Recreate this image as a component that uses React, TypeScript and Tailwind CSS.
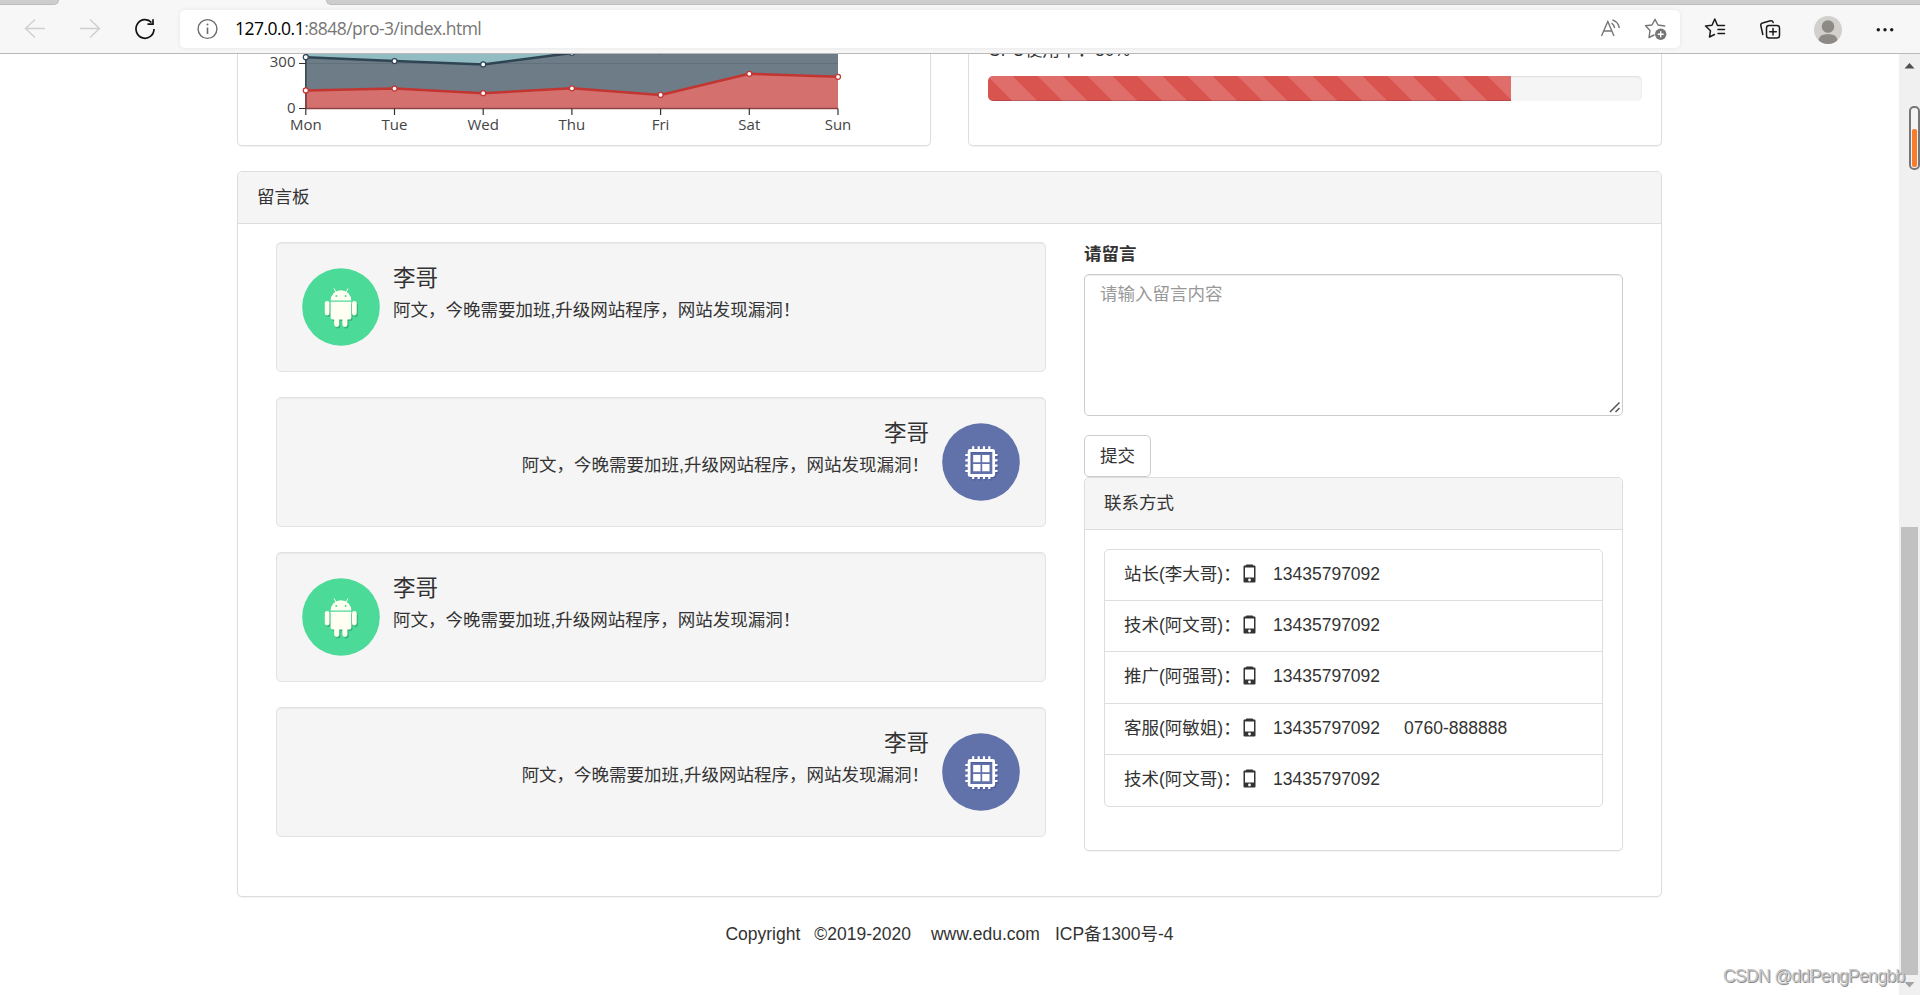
import React from "react";

const ui = "font-['Open_Sans','Noto_Sans_CJK_SC',sans-serif]";

function Toolbar() {
  return (
    <header className="flex h-[54px] shrink-0 flex-col border-b border-[#b9b9b9] bg-[#f7f7f7]">
      <div className="flex h-[5px] shrink-0 justify-between">
        <div className="w-[59px] rounded-br-[6px] border-b border-r border-[#bdbdbd] bg-[#cdcdcd]" />
        <div className="w-[1594px] rounded-bl-[6px] border-b border-l border-[#bdbdbd] bg-[#cdcdcd]" />
      </div>
      <div className="flex h-[48px] items-center pb-0.5 pt-0.5">
        <svg width="180" height="38" fill="none" strokeWidth="1.4">
          <path d="M45 18.500H25.500M35 9.500L25.500 18.500L35 27.500" stroke="#cfcfcf" />
          <path d="M80 18.500H99.500M90 9.500L99.500 18.500L90 27.500" stroke="#cfcfcf" />
          <path d="M151.500 12.500A9 9.300 0 1 0 154 19" stroke="#111" strokeWidth="1.7" />
          <path d="M153 9.200V14.200H147.500" stroke="#111" strokeWidth="1.7" />
        </svg>
        <div className="flex h-[38px] w-[1500px] items-center rounded-[5px] bg-white shadow-[0_0_4px_rgba(0,0,0,0.08)]">
          <svg width="55" height="38" fill="none" stroke="#6c6c6c">
            <circle cx="27.500" cy="19" r="9.400" strokeWidth="1.4" />
            <path d="M27.500 17.500V24" strokeWidth="1.6" />
            <circle cx="27.500" cy="14.500" r="1" fill="#6c6c6c" stroke="none" />
          </svg>
          <span className={`${ui} w-[1185px] whitespace-nowrap pb-px text-[17.5px] tracking-[-0.52px] text-[#767676]`}>
            <span className="text-black">127.0.0.1</span>:8848/pro-3/index.html
          </span>
          <svg width="260" height="38" viewBox="1420 0 260 38" fill="none" stroke="#767676" strokeWidth="1.4">
            <path d="M1601.500 26L1607.800 11.500L1614 26M1603.700 21H1612" />
            <path d="M1611.500 13.200A7 7 0 0 1 1614.600 18M1612.300 9.800A10 10 0 0 1 1619.300 18" />
            <path d="M1649 27.500L1650 20.500L1645.500 15.800L1652 15L1655 9.300L1658 15L1664.700 16M1649 27.500L1654 25" strokeLinejoin="round" strokeLinecap="round" />
            <circle cx="1660.700" cy="24.300" r="5.700" fill="#767676" stroke="none" />
            <path d="M1660.700 21.300V27.300M1657.700 24.300H1663.700" stroke="#fff" />
          </svg>
        </div>
        <svg width="240" height="44" viewBox="1680 4 240 44" fill="none" stroke="#1b1b1b" strokeWidth="1.5" strokeLinecap="round" strokeLinejoin="round">
          <path d="M1724.500 22.500H1717.500L1714.800 16L1712 22.300L1705.500 23L1710.500 27.700L1709.500 34L1714.500 31.500M1718 26.500H1724.500M1718 30.500H1724.500" />
          <rect x="1766.500" y="22.500" width="13" height="12.500" rx="2.500" />
          <path d="M1773 25.500V32M1769.700 28.700H1776.300M1762.800 31.500L1760.800 22.500Q1760.500 20.500 1762.500 20L1770.500 17.800Q1772.500 17.300 1773.200 19.500" />
          <circle cx="1828" cy="27" r="14" fill="#d2d0cd" stroke="none" />
          <circle cx="1828" cy="23.500" r="6.300" fill="#8d8a86" stroke="none" />
          <path d="M1818.500 37Q1819.500 31 1828 31Q1836.500 31 1837.500 37Q1834 41 1828 41Q1822 41 1818.500 37Z" fill="#8d8a86" stroke="none" />
          <g fill="#1b1b1b" stroke="none">
            <circle cx="1878.300" cy="26.700" r="1.700" />
            <circle cx="1885" cy="26.700" r="1.700" />
            <circle cx="1891.700" cy="26.700" r="1.700" />
          </g>
        </svg>
      </div>
    </header>
  );
}

const days = ["Mon", "Tue", "Wed", "Thu", "Fri", "Sat", "Sun"];
const email = [120, 132, 101, 134, 90, 230, 210];
const ads = [340, 314, 292, 368, 380, 560, 520];
const X0 = 67.8;
const STEP = 88.7;
const BASE = 54.5;
const px = (i: number) => X0 + i * STEP;
const py = (v: number) => BASE - v * 0.151;
const line = (d: number[]) => d.map((v, i) => `${px(i)},${py(v)}`).join(" ");

function Chart() {
  const floor = `${px(6)},${BASE} ${px(0)},${BASE}`;
  return (
    <svg width="640" height="80" className={`${ui} text-[15px]`}>
      <rect x={X0} y="0" width={STEP * 6} height={BASE} fill="#91bcc2" />
      <polygon points={`${line(ads)} ${floor}`} fill="#6d7c87" />
      <path d={`M${X0} 9.500H${px(6)}`} stroke="#61707b" />
      <polygon points={`${line(email)} ${floor}`} fill="#d4706e" />
      <path d={`M${X0} 0V${BASE}`} stroke="#33404a" strokeWidth="1.5" />
      <path d={`M${X0} 36V${BASE}M${X0} ${BASE}H${px(6)}`} stroke="#8c4343" strokeWidth="1.5" />
      <polyline points={line(ads)} fill="none" stroke="#2f4554" strokeWidth="2.500" />
      <polyline points={line(email)} fill="none" stroke="#c23531" strokeWidth="2.500" />
      {ads.map((v, i) => (
        <circle key={i} cx={px(i)} cy={py(v)} r="2.500" fill="#fff" stroke="#2f4554" strokeWidth="1.250" />
      ))}
      {email.map((v, i) => (
        <circle key={i} cx={px(i)} cy={py(v)} r="2.500" fill="#fff" stroke="#c23531" strokeWidth="1.250" />
      ))}
      <path d={`M61 9.500H${X0}M61 ${BASE}H${X0}`} stroke="#333" strokeWidth="1.2" />
      {days.map((d, i) => (
        <g key={d}>
          <path d={`M${px(i)} ${BASE}v6.500`} stroke="#333" strokeWidth="1.2" />
          <text x={px(i)} y="76" textAnchor="middle" fill="#444">{d}</text>
        </g>
      ))}
      <text x="57.500" y="13" textAnchor="end" fill="#444">300</text>
      <text x="57.500" y="59" textAnchor="end" fill="#444">0</text>
    </svg>
  );
}

function Android() {
  return (
    <svg width="78" height="78" viewBox="0 0 78 78" className="shrink-0">
      <circle cx="39" cy="39" r="38.800" fill="#4bda97" />
      <g fill="#35b67a" transform="translate(1.2 1.6)">
        <rect x="28.600" y="34" width="20.700" height="17.500" rx="2" />
        <rect x="32.200" y="46" width="5" height="13" rx="2.400" />
        <rect x="40.400" y="46" width="5" height="13" rx="2.400" />
        <rect x="22.800" y="33" width="4.700" height="14.400" rx="2.300" />
        <rect x="50" y="33" width="4.700" height="14.400" rx="2.300" />
      </g>
      <g fill="#fffff2">
        <path d="M28.600 32.400A10.300 10.200 0 0 1 49.300 32.400Z" />
        <path d="M28.600 33.800H49.300V49.500Q49.300 51.500 47.300 51.500H30.600Q28.600 51.500 28.600 49.500Z" />
        <rect x="32.200" y="46" width="5" height="13" rx="2.400" />
        <rect x="40.400" y="46" width="5" height="13" rx="2.400" />
        <rect x="22.800" y="33" width="4.700" height="14.400" rx="2.300" />
        <rect x="50" y="33" width="4.700" height="14.400" rx="2.300" />
      </g>
      <path d="M32 20.500L34 24.200M46 20.500L44 24.200" stroke="#fffff2" />
      <circle cx="34.300" cy="28" r="1" fill="#4bda97" />
      <circle cx="43.600" cy="28" r="1" fill="#4bda97" />
    </svg>
  );
}

function ChipShape() {
  return (
    <>
      <rect x="27.100" y="27.500" width="24.600" height="25" rx="1" fill="none" strokeWidth="2.800" />
      <path
        d="M31.200 23.300V27M36.700 23.300V27M42 23.300V27M47.300 23.300V27M31.200 53V56M36.700 53V56M42 53V56M47.300 53V56M23.300 32H27M23.300 37.300H27M23.300 42.700H27M23.300 48H27M52 32H55.500M52 37.300H55.500M52 42.700H55.500M52 48H55.500"
        strokeWidth="2.200"
      />
    </>
  );
}

function Chip() {
  return (
    <svg width="78" height="78" viewBox="0 0 78 78" className="shrink-0">
      <circle cx="39" cy="39" r="38.800" fill="#6171aa" />
      <g stroke="#51609a" transform="translate(1.2 1.4)"><ChipShape /></g>
      <g stroke="#fff"><ChipShape /></g>
      <path d="M31.200 32H38.500V39.200H31.200ZM40.200 32H47.500V39.200H40.200ZM31.200 41H38.500V48.200H31.200ZM40.200 41H47.500V48.200H40.200Z" fill="#fff" />
    </svg>
  );
}

function Message({ right = false }: { right?: boolean }) {
  return (
    <div className={`flex h-[130px] gap-[13px] rounded-[5px] border border-[#e3e3e3] bg-[#f5f5f5] px-[25px] pt-[25px] shadow-[inset_0_1px_1px_rgba(0,0,0,0.05)] ${right ? "flex-row-reverse text-right" : ""}`}>
      {right ? <Chip /> : <Android />}
      <div>
        <h4 className="-mt-[2px] text-[22.5px] leading-[25px]">李哥</h4>
        <p className="mt-[7px] whitespace-nowrap leading-[25px]">阿文，今晚需要加班,升级网站程序，网站发现漏洞！</p>
      </div>
    </div>
  );
}

const contacts = [
  { who: "站长(李大哥)：", tel: "13435797092" },
  { who: "技术(阿文哥)：", tel: "13435797092" },
  { who: "推广(阿强哥)：", tel: "13435797092" },
  { who: "客服(阿敏姐)：", tel: "13435797092", fax: "0760-888888" },
  { who: "技术(阿文哥)：", tel: "13435797092" },
];

function Phone() {
  return (
    <svg width="13" height="19" className="-mt-[2px] shrink-0">
      <path d="M2.500 1.500L3.500 0.500H9.500L10.500 1.500H11.500Q12.500 1.500 12.500 2.500V17.500Q12.500 18.500 11.500 18.500H1.500Q0.500 18.500 0.500 17.500V2.500Q0.500 1.500 1.500 1.500Z" fill="#333" />
      <rect x="2" y="3.500" width="9" height="10" fill="#fff" />
      <circle cx="6.500" cy="16" r="1.400" fill="#fff" />
    </svg>
  );
}

const panel = "rounded-[5px] border border-[#ddd] bg-white shadow-[0_1px_1px_rgba(0,0,0,0.05)]";

export default function App() {
  return (
    <div className="relative flex h-[995px] w-[1920px] flex-col overflow-hidden bg-white font-['Liberation_Sans','Noto_Sans_CJK_SC',sans-serif] text-[17.5px] leading-[25px] text-[#333]">
      <Toolbar />
      <div className="flex min-h-0 flex-1">
        <main className="flex w-[1899px] flex-col overflow-hidden px-[237px]">
          <div className="flex gap-[37px]">
            <section className={`${panel} h-[92px] w-[694px] rounded-t-none border-t-0`}>
              <Chart />
            </section>
            <section className={`${panel} h-[92px] w-[694px] rounded-t-none border-t-0 px-[19px]`}>
              <p className="-mt-[16px] h-[38px]">CPU使用率：80%</p>
              <div className="h-[25px] overflow-hidden rounded-[5px] bg-[#f5f5f5] shadow-[inset_0_1px_2px_rgba(0,0,0,0.1)]">
                <div className="h-full w-4/5 bg-[#d9534f] bg-[linear-gradient(45deg,rgba(255,255,255,0.15)_25%,transparent_25%,transparent_50%,rgba(255,255,255,0.15)_50%,rgba(255,255,255,0.15)_75%,transparent_75%,transparent)] bg-[length:50px_50px] shadow-[inset_0_-1px_0_rgba(0,0,0,0.15)]" />
              </div>
            </section>
          </div>

          <section className={`${panel} mt-[25px] h-[726px] w-[1425px] shrink-0`}>
            <h3 className="flex h-[52px] items-center rounded-t-[4px] border-b border-[#ddd] bg-[#f5f5f5] px-[19px]">留言板</h3>
            <div className="flex gap-[38px] pl-[38px] pt-[18px]">
              <div className="flex w-[770px] flex-col gap-[25px]">
                <Message />
                <Message right />
                <Message />
                <Message right />
              </div>
              <div className="w-[539px]">
                <div className="flex h-[32px] items-center pb-[8px] font-bold">请留言</div>
                <div className="relative h-[142px]">
                  <textarea
                    placeholder="请输入留言内容"
                    className="block h-full w-full resize-none rounded-[5px] border border-[#ccc] px-[15px] py-[7px] shadow-[inset_0_1px_1px_rgba(0,0,0,0.075)] placeholder:text-[#999]"
                  />
                  <svg width="12" height="12" className="absolute bottom-[3px] right-[2px]" stroke="#555" strokeWidth="1.5">
                    <path d="M1 11L10.500 1.500M6.500 11L10.500 7" />
                  </svg>
                </div>
                <button className="mt-[19px] flex h-[42px] w-[67px] items-center justify-center rounded-[5px] border border-[#ccc] bg-white pt-px">提交</button>
                <div className={`${panel} h-[374px]`}>
                  <h3 className="flex h-[52px] items-center rounded-t-[4px] border-b border-[#ddd] bg-[#f5f5f5] px-[19px]">联系方式</h3>
                  <ul className="mx-[19px] mt-[19px] divide-y divide-[#ddd] rounded-[5px] border border-[#ddd]">
                    {contacts.map((c, i) => (
                      <li key={i} className="flex h-[51.2px] items-center px-[19px] pb-px">
                        <span className="w-[119px] whitespace-nowrap">{c.who}</span>
                        <Phone />
                        <span className="ml-[17px] w-[131px]">{c.tel}</span>
                        {c.fax && <span>{c.fax}</span>}
                      </li>
                    ))}
                  </ul>
                </div>
              </div>
            </div>
          </section>

          <footer className="mt-[25px] flex w-[1425px] justify-center whitespace-pre">
            <span className="mr-[14px]">Copyright</span>
            <span className="mr-[20px]">©2019-2020</span>
            <span className="mr-[15px]">www.edu.com</span>
            <span>ICP备1300号-4</span>
          </footer>
        </main>

        <aside className="flex w-[21px] flex-col items-center justify-between bg-[#f0f0f0]">
          <svg width="21" height="20" className="shrink-0"><path d="M5.500 14.500L10.500 9L15.500 14.500Z" fill="#505050" /></svg>
          <div className="mt-auto h-[448px] w-[17px] bg-[#c1c1c1]" />
          <svg width="21" height="20" className="shrink-0"><path d="M5.500 7L10.500 12.500L15.500 7Z" fill="#a3a3a3" /></svg>
        </aside>
      </div>

      <div className="absolute right-0 top-[106px] flex h-[64px] w-[11px] flex-col justify-end rounded-[5px] border-2 border-[#767676] bg-[#f3f3f3] p-px">
        <div className="h-[38px] rounded-[2px] bg-[#f97b2b]" />
      </div>
      <div className="absolute left-[1723px] top-[964px] whitespace-nowrap text-[17.5px] tracking-[-0.62px] text-[#c4c4c4] [text-shadow:1px_1px_0_#8f8f8f]">CSDN @ddPengPengbb</div>
    </div>
  );
}
